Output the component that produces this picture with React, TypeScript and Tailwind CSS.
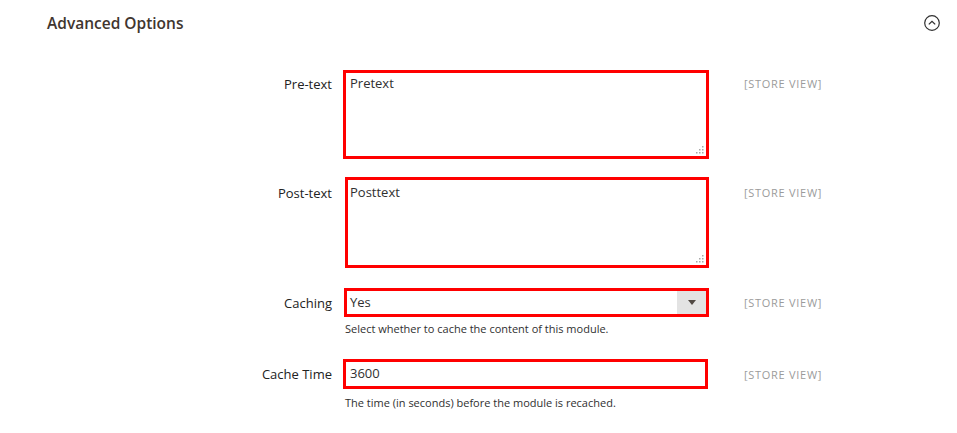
import React from 'react';

const Grip: React.FC = () => (
  <svg width="9" height="9" viewBox="0 0 9 9" className="absolute bottom-[2px] right-[2px]">
    {[
      [7, 1], [7, 4], [7, 7], [4, 4], [4, 7], [1, 7],
    ].map(([x, y], i) => (
      <rect key={i} x={x} y={y} width="1.5" height="1.5" fill="#a8a8a8" />
    ))}
  </svg>
);

const StoreView: React.FC<{ pt: string }> = ({ pt }) => (
  <div className={`ml-[35px] text-[11px] leading-[16px] tracking-[0.065em] uppercase text-[#9b9b9b] ${pt}`}>
    [Store View]
  </div>
);

const labelCls = 'w-[332px] text-right text-[13px] leading-[18px] text-[#222]';

const App: React.FC = () => {
  return (
    <div className="min-h-screen bg-white font-['Open_Sans',sans-serif] text-[#303030]">
      {/* Section header */}
      <div className="flex items-center justify-between pl-[47px] pr-[17px] pt-[12px] h-[33px]">
        <h2 className="text-[15.5px] leading-[20px] font-semibold text-[#41362f]">Advanced Options</h2>
        <svg width="16" height="16" viewBox="0 0 16 16" fill="none" stroke="#303030">
          <circle cx="8" cy="8" r="7.3" strokeWidth="1.2" />
          <path d="M4.8 9.4 L8 6.3 L11.2 9.4" strokeWidth="1.3" />
        </svg>
      </div>

      {/* Pre-text */}
      <div className="flex items-start mt-[37px]">
        <div className={`${labelCls} pt-[5px]`}>Pre-text</div>
        <div className="w-[377px] pl-[11px]">
          <div className="relative h-[89px] border-[3px] border-[#ff0000] pl-[4px] pt-[1px] text-[13px] leading-[18px]">
            Pretext
            <Grip />
          </div>
        </div>
        <StoreView pt="pt-[6px]" />
      </div>

      {/* Post-text */}
      <div className="flex items-start mt-[18px]">
        <div className={`${labelCls} pt-[7px]`}>Post-text</div>
        <div className="w-[377px] pl-[13px]">
          <div className="relative h-[91px] border-[3px] border-[#ff0000] pl-[2px] pt-[3px] text-[13px] leading-[18px]">
            Posttext
            <Grip />
          </div>
        </div>
        <StoreView pt="pt-[8px]" />
      </div>

      {/* Caching */}
      <div className="flex items-start mt-[20px]">
        <div className={`${labelCls} pt-[6px]`}>Caching</div>
        <div className="w-[377px] pl-[12px]">
          <div className="flex h-[29px] border-[3px] border-[#ff0000] text-[13px]">
            <div className="flex-1 flex items-center pl-[3px]">Yes</div>
            <div className="w-[29px] bg-[#e3e3e3] flex items-center justify-center">
              <svg width="8" height="5" viewBox="0 0 8 5">
                <path d="M0 0 H8 L4 5 Z" fill="#514943" />
              </svg>
            </div>
          </div>
          <div className="mt-[5px] pl-[1px] text-[11px] leading-[14px]">
            Select whether to cache the content of this module.
          </div>
        </div>
        <StoreView pt="pt-[7px]" />
      </div>

      {/* Cache Time */}
      <div className="flex items-start mt-[23px]">
        <div className={`${labelCls} pt-[6px]`}>Cache Time</div>
        <div className="w-[377px] pl-[11px] pr-[1px]">
          <div className="flex items-center h-[30px] border-[3px] border-[#ff0000] pl-[4px] text-[13px]">
            3600
          </div>
          <div className="mt-[7px] pl-[2px] text-[11px] leading-[14px]">
            The time (in seconds) before the module is recached.
          </div>
        </div>
        <StoreView pt="pt-[8px]" />
      </div>
    </div>
  );
};

export default App;
